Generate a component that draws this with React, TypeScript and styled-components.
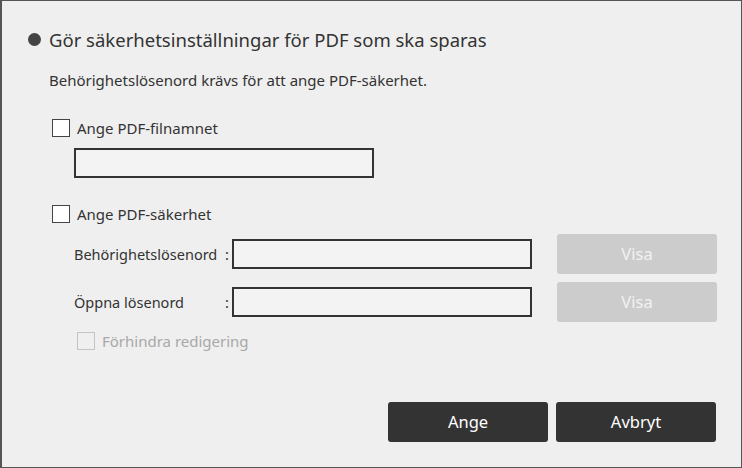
import React, { useState } from "react";
import styled, { createGlobalStyle } from "styled-components";

const GlobalStyle = createGlobalStyle`
  html, body {
    margin: 0;
    padding: 0;
    background: #efefef;
  }
  * {
    box-sizing: border-box;
  }
`

const Dialog = styled.div`
  width: 742px;
  height: 468px;
  background: #efefef;
  border: 1px solid #555555;
  border-left-width: 2px;
  display: flex;
  flex-direction: column;
  padding: 26px 25px 0 26px;
  font-family: "Noto Sans", "Open Sans", sans-serif;
  color: #333333;
`

const Title = styled.div`
  display: flex;
  align-items: center;
  gap: 8px;
  height: 24px;
  font-size: 18.5px;
  color: #333333;
  &:before {
    content: "";
    width: 13px;
    height: 13px;
    border-radius: 50%;
    background: #444444;
  }
`

const Note = styled.div`
  margin: 19px 0 0 21px;
  height: 20px;
  line-height: 20px;
  font-size: 15px;
`

const CheckRow = styled.label<{ $top: number; $indent: number; $disabled?: boolean }>`
  display: flex;
  align-items: center;
  gap: 7px;
  height: 20px;
  margin: ${(p) => p.$top}px 0 0 ${(p) => p.$indent}px;
  font-size: 15px;
  color: ${(p) => (p.$disabled ? "#a8a8a8" : "#333333")};
  cursor: ${(p) => (p.$disabled ? "default" : "pointer")};
`

const Box = styled.span<{ $checked: boolean; $disabled?: boolean }>`
  width: 18px;
  height: 18px;
  border: 1.5px solid ${(p) => (p.$disabled ? "#c4c4c4" : "#444444")};
  background: ${(p) => (p.$disabled ? "#efefef" : "#ffffff")};
  display: flex;
  align-items: center;
  justify-content: center;
`

const TextInput = styled.input<{ $width: number }>`
  width: ${(p) => p.$width}px;
  height: 30px;
  border: 2px solid #333333;
  background: #f3f3f3;
  padding: 0 6px;
  font-family: inherit;
  font-size: 14px;
  outline: none;
`

const FileInput = styled(TextInput)`
  margin: 10px 0 0 46px;
`

const PasswordGrid = styled.div`
  display: grid;
  grid-template-columns: 151px 7px 300px 160px;
  grid-auto-rows: 40px;
  row-gap: 8px;
  align-items: center;
  margin: 10px 0 0 46px;
`

const FieldLabel = styled.span`
  font-size: 14.5px;
  white-space: nowrap;
`

const Colon = styled.span`
  font-size: 14.5px;
`

const GreyButton = styled.button`
  width: 160px;
  height: 40px;
  margin-left: 25px;
  padding-bottom: 2px;
  border: none;
  border-radius: 3px;
  background: #cccccc;
  color: #f2f2f2;
  font-family: inherit;
  font-size: 16.5px;
`

const Footer = styled.div`
  margin-top: auto;
  margin-bottom: 25px;
  display: flex;
  justify-content: flex-end;
  gap: 8px;
`

const DarkButton = styled.button`
  width: 160px;
  height: 40px;
  padding-bottom: 2px;
  border: none;
  border-radius: 3px;
  background: #333333;
  color: #ffffff;
  font-family: inherit;
  font-size: 16.5px;
  cursor: pointer;
`

function Check({ checked, disabled }: { checked: boolean; disabled?: boolean }) {
  return (
    <Box $checked={checked} $disabled={disabled}>
      {checked && (
        <svg width="12" height="12" viewBox="0 0 12 12">
          <path d="M2 6.5 L5 9 L10 3" stroke="#333" strokeWidth="1.6" fill="none" />
        </svg>
      )}
    </Box>
  )
}

export default function App() {
  const [fileName, setFileName] = useState(false)
  const [security, setSecurity] = useState(false)

  return (
    <>
      <GlobalStyle />
      <Dialog>
        <Title>Gör säkerhetsinställningar för PDF som ska sparas</Title>
        <Note>Behörighetslösenord krävs för att ange PDF-säkerhet.</Note>

        <CheckRow $top={28} $indent={24} onClick={() => setFileName(!fileName)}>
          <Check checked={fileName} />
          Ange PDF-filnamnet
        </CheckRow>
        <FileInput $width={300} />

        <CheckRow $top={26} $indent={24} onClick={() => setSecurity(!security)}>
          <Check checked={security} />
          Ange PDF-säkerhet
        </CheckRow>

        <PasswordGrid>
          <FieldLabel>Behörighetslösenord</FieldLabel>
          <Colon>:</Colon>
          <TextInput $width={300} type="password" />
          <GreyButton disabled>Visa</GreyButton>

          <FieldLabel>Öppna lösenord</FieldLabel>
          <Colon>:</Colon>
          <TextInput $width={300} type="password" />
          <GreyButton disabled>Visa</GreyButton>
        </PasswordGrid>

        <CheckRow $top={9} $indent={49} $disabled>
          <Check checked={false} disabled />
          Förhindra redigering
        </CheckRow>

        <Footer>
          <DarkButton>Ange</DarkButton>
          <DarkButton>Avbryt</DarkButton>
        </Footer>
      </Dialog>
    </>
  )
}
